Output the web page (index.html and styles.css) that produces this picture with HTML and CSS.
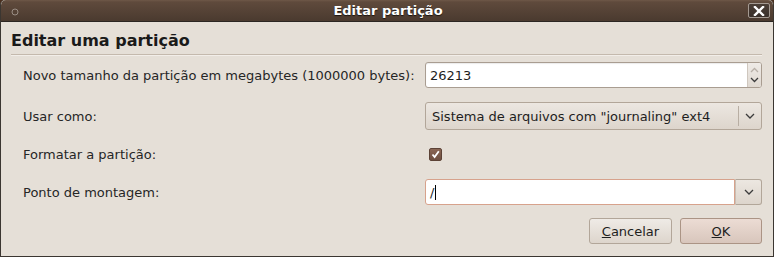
FILE: index.html
```html
<!DOCTYPE html>
<html lang="pt">
<head>
<meta charset="utf-8">
<title>Editar partição</title>
<link rel="stylesheet" href="styles.css">
</head>
<body>
<div class="window">
  <div class="titlebar">
    <svg class="menu-dot" width="8" height="8" viewBox="0 0 8 8"><circle cx="4" cy="4" r="3" fill="none" stroke="#9a8d84" stroke-width="1"/></svg>
    <span class="title">Editar partição</span>
    <span class="close"><svg width="12" height="10" viewBox="0 0 12 10"><path d="M2 1 L10 9 M10 1 L2 9" stroke="#fff" stroke-width="2.4" stroke-linecap="square"/></svg></span>
  </div>
  <div class="content">
    <h1 class="heading">Editar uma partição</h1>
    <div class="sep"></div>
    <div class="form">
      <div class="row r1">
        <label class="label">Novo tamanho da partição em megabytes (1000000 bytes):</label>
        <div class="spin">
          <span class="entry-text">26213</span>
          <span class="spin-btns">
            <svg width="9" height="6" viewBox="0 0 9 6"><path d="M1 5 L4.5 1.5 L8 5" fill="none" stroke="#b8b0a8" stroke-width="1.3"/></svg>
            <svg width="9" height="6" viewBox="0 0 9 6"><path d="M1 1 L4.5 4.5 L8 1" fill="none" stroke="#3c3c3c" stroke-width="1.3"/></svg>
          </span>
        </div>
      </div>
      <div class="row r2">
        <label class="label">Usar como:</label>
        <div class="combo">
          <span class="combo-text">Sistema de arquivos com "journaling" ext4</span>
          <span class="combo-divider"></span>
          <span class="combo-arrow"><svg width="10" height="6" viewBox="0 0 10 6"><path d="M1 1 L5 5 L9 1" fill="none" stroke="#3c3c3c" stroke-width="1.3"/></svg></span>
        </div>
      </div>
      <div class="row r3">
        <label class="label">Formatar a partição:</label>
        <div class="check-cell">
          <span class="check"><svg width="9" height="9" viewBox="0 0 9 9"><path d="M1.5 4.5 L3.6 7 L7.8 1.2" fill="none" stroke="#fff" stroke-width="1.8"/></svg></span>
        </div>
      </div>
      <div class="row r4">
        <label class="label">Ponto de montagem:</label>
        <div class="combo-entry">
          <span class="entry focus"><span class="entry-text">/</span><span class="caret"></span></span>
          <span class="ce-btn"><svg width="10" height="6" viewBox="0 0 10 6"><path d="M1 1 L5 5 L9 1" fill="none" stroke="#3c3c3c" stroke-width="1.3"/></svg></span>
        </div>
      </div>
    </div>
    <div class="buttons">
      <button class="btn"><u>C</u>ancelar</button>
      <button class="btn default"><u>O</u>K</button>
    </div>
  </div>
</div>
</body>
</html>
```

FILE: styles.css
```css
html, body {
  margin: 0;
  padding: 0;
  background: #4a2f1e;
}
body {
  width: 774px;
  height: 257px;
  overflow: hidden;
  font-family: "DejaVu Sans", "Liberation Sans", sans-serif;
  font-size: 13px;
  color: #1e1e1e;
}
.window {
  width: 774px;
  height: 257px;
  box-sizing: border-box;
  border: 1px solid #3b3631;
  border-top: none;
  border-radius: 5px 5px 0 0;
  background: #e5dfd7;
  display: flex;
  flex-direction: column;
  overflow: hidden;
}
.titlebar {
  height: 22px;
  flex: none;
  box-sizing: border-box;
  background: linear-gradient(#6e5848 0px, #5f4a3c 2px, #4a3a2f 21px);
  border-bottom: 1px solid #2c2622;
  border-radius: 5px 5px 0 0;
  display: flex;
  align-items: center;
  position: relative;
}
.menu-dot {
  position: absolute;
  left: 10px;
  top: 8px;
}
.title {
  flex: 1;
  text-align: center;
  font-weight: bold;
  font-size: 13px;
  color: #ffffff;
  text-shadow: 0 1px 1px #1a1410;
  padding-left: 2px;
}
.close {
  position: absolute;
  right: 3px;
  top: 3px;
  width: 22px;
  height: 15px;
  box-sizing: border-box;
  border: 1px solid #a49a92;
  border-radius: 2px;
  background: linear-gradient(#4a3e36, #3a302a);
  display: flex;
  align-items: center;
  justify-content: center;
}
.content {
  flex: 1;
  padding: 0 11px 0 10px;
  display: flex;
  flex-direction: column;
}
.heading {
  margin: 8px 0 0 0;
  font-size: 16px;
  font-weight: bold;
  line-height: 21px;
  color: #1a1a1a;
}
.sep {
  margin-top: 3px;
  height: 1px;
  background: #c4b9ad;
  border-bottom: 1px solid #f2eee9;
}
.form {
  margin-top: 6px;
  padding-left: 12px;
  display: flex;
  flex-direction: column;
}
.row {
  display: flex;
  align-items: center;
}
.label {
  width: 402px;
  flex: none;
  color: #262626;
}
.r1 { height: 26px; }
.r2 { height: 28px; margin-top: 14px; }
.r3 { height: 26px; margin-top: 11px; }
.r4 { height: 26px; margin-top: 12px; }

.spin {
  flex: 1;
  height: 26px;
  box-sizing: border-box;
  border: 1px solid #a99d91;
  border-radius: 3px;
  background: #ffffff;
  display: flex;
  align-items: center;
  box-shadow: inset 0 1px 1px rgba(0,0,0,0.08);
}
.entry-text {
  padding-left: 4px;
  color: #1e1e1e;
}
.spin .entry-text { flex: 1; }
.spin-btns {
  width: 14px;
  height: 24px;
  box-sizing: border-box;
  border-left: 1px solid #cfc7be;
  background: linear-gradient(#efebe7, #e0d9d1);
  border-radius: 0 2px 2px 0;
  display: flex;
  flex-direction: column;
  align-items: center;
  justify-content: space-evenly;
}
.combo {
  flex: 1;
  height: 28px;
  box-sizing: border-box;
  border: 1px solid #b2a699;
  border-radius: 3px;
  background: linear-gradient(#ece7e1, #ddd5cc);
  display: flex;
  align-items: center;
}
.combo-text {
  flex: 1;
  padding-left: 6px;
  color: #1e1e1e;
}
.combo-divider {
  width: 1px;
  height: 20px;
  background: #b8aea3;
}
.combo-arrow {
  width: 22px;
  display: flex;
  justify-content: center;
  align-items: center;
}
.check-cell {
  flex: 1;
  display: flex;
  align-items: center;
  padding-left: 4px;
}
.check {
  width: 13px;
  height: 13px;
  box-sizing: border-box;
  border-radius: 2px;
  background: linear-gradient(#8a6654, #6e4f40);
  border: 1px solid #5c4236;
  display: flex;
  align-items: center;
  justify-content: center;
}
.combo-entry {
  flex: 1;
  height: 26px;
  display: flex;
}
.entry {
  flex: 1;
  box-sizing: border-box;
  background: #fff;
  border: 1px solid #d7a28c;
  border-radius: 3px 0 0 3px;
  display: flex;
  align-items: center;
}
.caret {
  width: 1px;
  height: 15px;
  background: #000;
  margin-left: 1px;
}
.ce-btn {
  width: 27px;
  box-sizing: border-box;
  border: 1px solid #b2a699;
  border-left: 1px solid #c9bfb4;
  border-radius: 0 3px 3px 0;
  background: linear-gradient(#ece7e1, #ddd5cc);
  display: flex;
  align-items: center;
  justify-content: center;
}
.buttons {
  margin-top: 13px;
  display: flex;
  justify-content: flex-end;
  gap: 8px;
}
.btn {
  height: 26px;
  box-sizing: border-box;
  font-family: "DejaVu Sans", "Liberation Sans", sans-serif;
  font-size: 13px;
  color: #1e1e1e;
  border: 1px solid #b2a699;
  border-radius: 3px;
  background: linear-gradient(#efebe6, #ddd5cc);
  padding: 0;
  width: 83px;
}
.btn.default {
  width: 82px;
  border-color: #ab9485;
  background: linear-gradient(#ecdcd4, #d8c6bc);
}
```
